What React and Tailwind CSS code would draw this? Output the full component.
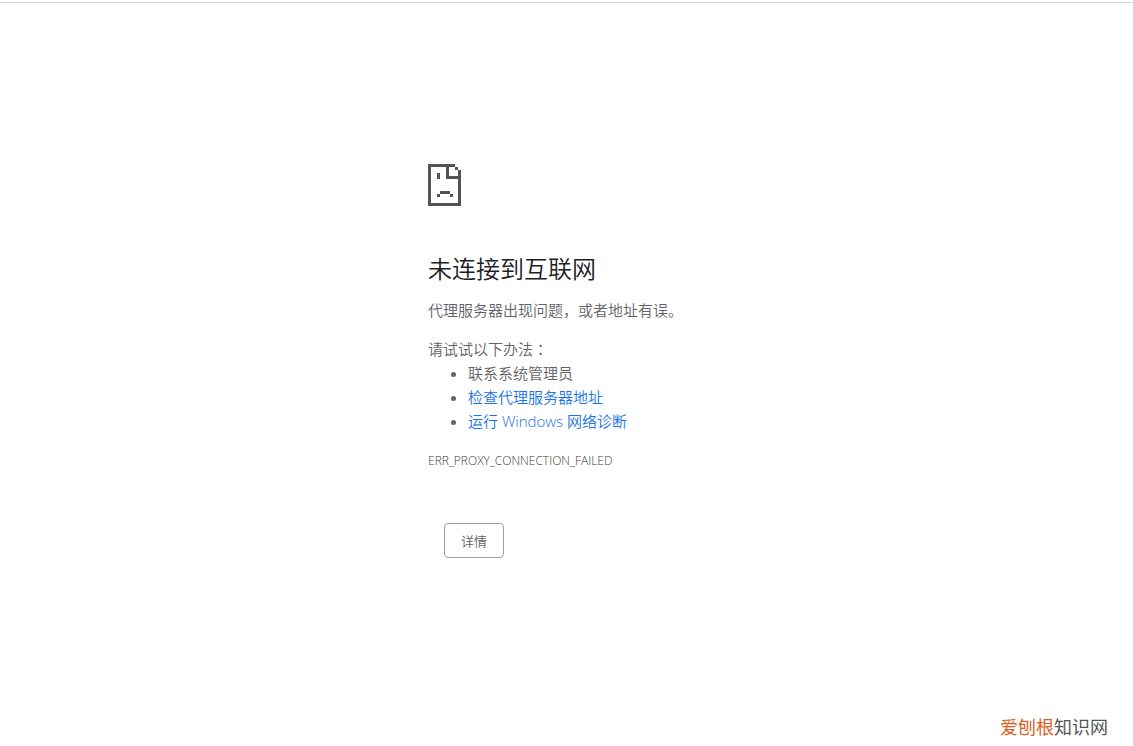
import React from 'react';

const suggestions = [
    { text: '联系系统管理员' },
    { text: '检查代理服务器地址', href: '#proxy' },
    { text: '运行 Windows 网络诊断', href: '#diagnose' },
];

function SadPageIcon() {
    return (
        <svg className="h-[42px] w-[33px]" viewBox="0 0 33 42" fill="#535353" shapeRendering="crispEdges" aria-hidden="true">
            {/* Page outline */}
            <path d="M0 0h27v3H3v36h27V15H18V3h3v9h9V6h3v36H0z" />
            {/* Folded corner */}
            <path d="M27 3h3v3h-3z" />
            {/* Face */}
            <path d="M9 9h3v6H9zM12 27h10v3H12zM9 30h3v3H9zM22 30h3v3h-3z" />
        </svg>
    );
}

export default function App() {
    return (
        <div className="flex min-h-screen flex-col bg-white pt-[2px] font-['Open_Sans','Noto_Sans_CJK_SC',sans-serif] text-[15px] leading-6 font-[350] text-[#5f6368]">
            <div className="border-t border-[#d9d9d9]"></div>

            <main className="mx-auto w-[277px] flex-1 pt-[161px]">
                <SadPageIcon />

                <h1 className="mt-12 text-2xl leading-[30px] font-[350] text-[#202124]">未连接到互联网</h1>
                <p className="mt-[14px]">代理服务器出现问题，或者地址有误。</p>

                <p className="mt-[15px]">
                    请试试以下办法<span className="font-['Noto_Sans_CJK_TC',sans-serif]">：</span>
                </p>
                <ul className="list-disc pl-10">
                    {suggestions.map((item) => (
                        <li key={item.text}>
                            {item.href ? <a href={item.href} className="text-[#1a73e8]">{item.text}</a> : item.text}
                        </li>
                    ))}
                </ul>

                <p className="mt-4 text-xs leading-6 font-light text-[#3c4043]">ERR_PROXY_CONNECTION_FAILED</p>

                <button type="button" className="mt-[50px] ml-4 h-[35px] w-[60px] rounded border border-[#9aa0a6] text-[13px]">
                    详情
                </button>
            </main>

            <footer className="flex justify-end pr-[25px] pb-[5px] text-lg leading-7 font-normal">
                <span className="text-[#d9601f]">爱刨根</span>
                <span className="text-[#555555]">知识网</span>
            </footer>
        </div>
    );
}
